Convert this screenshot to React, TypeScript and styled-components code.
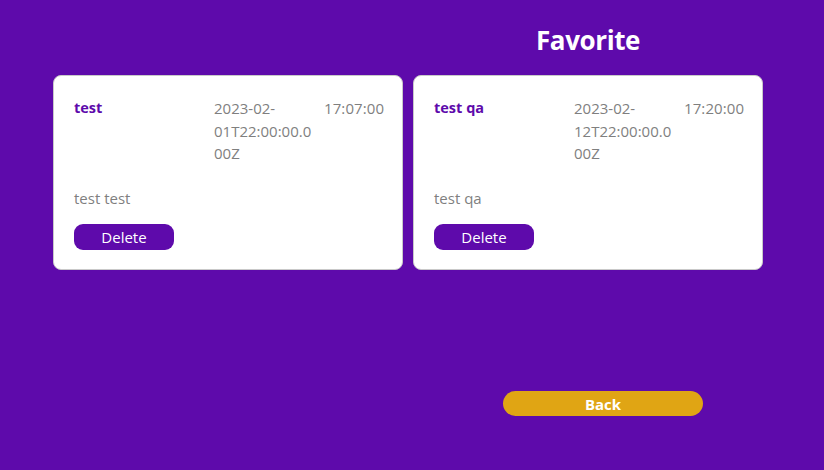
import React from "react";
import styled, { createGlobalStyle } from "styled-components";

const Global = createGlobalStyle`
  html, body { margin: 0; padding: 0; background: #5e0aab; }
  body { font-family: "Open Sans", "Noto Sans", "Liberation Sans", sans-serif; }
  #root { min-height: 470px; }
`;

const Page = styled.div`
  width: 824px;
  height: 470px;
  background: #5e0aab;
  display: flex;
  flex-direction: column;
  box-sizing: border-box;
  padding-top: 22px;
`;

const Title = styled.h1`
  margin: 0 0 0 413px;
  width: 350px;
  text-align: center;
  color: #ffffff;
  font-size: 26px;
  font-weight: 700;
  line-height: 36px;
  letter-spacing: -0.4px;
`;

const Cards = styled.div`
  display: flex;
  gap: 10px;
  margin: 17px 0 0 53px;
`;

const Card = styled.div`
  width: 350px;
  height: 195px;
  box-sizing: border-box;
  background: #ffffff;
  border: 1px solid #c9c9c9;
  border-radius: 8px;
  padding: 21px 20px 20px 20px;
  display: flex;
  flex-direction: column;
`;

const Row = styled.div`
  display: grid;
  grid-template-columns: 140px 110px auto;
  font-size: 15px;
  line-height: 22.5px;
  color: #7f7f7f;
`;

const Name = styled.div`
  color: #5e0aab;
  font-weight: 700;
  font-size: 14.5px;
`;

const DateText = styled.div`
  overflow-wrap: anywhere;
  padding-right: 6px;
`;

const TimeText = styled.div`
  letter-spacing: 0.1px;
`;

const Desc = styled.div`
  margin-top: 22px;
  font-size: 15px;
  line-height: 22px;
  color: #7f7f7f;
`;

const DeleteButton = styled.button`
  margin-top: 15px;
  width: 100px;
  height: 26px;
  border: none;
  border-radius: 9px;
  background: #5e0aab;
  color: #ffffff;
  font-family: inherit;
  font-size: 15px;
  padding: 0;
  cursor: pointer;
`;

const BackRow = styled.div`
  margin: 121px 0 0 503px;
`;

const BackButton = styled.button`
  width: 200px;
  height: 25px;
  border: none;
  border-radius: 13px;
  background: #e0a514;
  color: #ffffff;
  font-family: inherit;
  font-weight: 700;
  font-size: 15px;
  padding: 0;
  cursor: pointer;
`;

const items = [
  { name: "test", date: "2023-02-01T22:00:00.000Z", time: "17:07:00", desc: "test test" },
  { name: "test qa", date: "2023-02-12T22:00:00.000Z", time: "17:20:00", desc: "test qa" },
];

export default function App() {
  return (
    <>
      <Global />
      <Page>
        <Title>Favorite</Title>
        <Cards>
          {items.map((it) => (
            <Card key={it.name}>
              <Row>
                <Name>{it.name}</Name>
                <DateText>{it.date}</DateText>
                <TimeText>{it.time}</TimeText>
              </Row>
              <Desc>{it.desc}</Desc>
              <div>
                <DeleteButton>Delete</DeleteButton>
              </div>
            </Card>
          ))}
        </Cards>
        <BackRow>
          <BackButton>Back</BackButton>
        </BackRow>
      </Page>
    </>
  );
}
